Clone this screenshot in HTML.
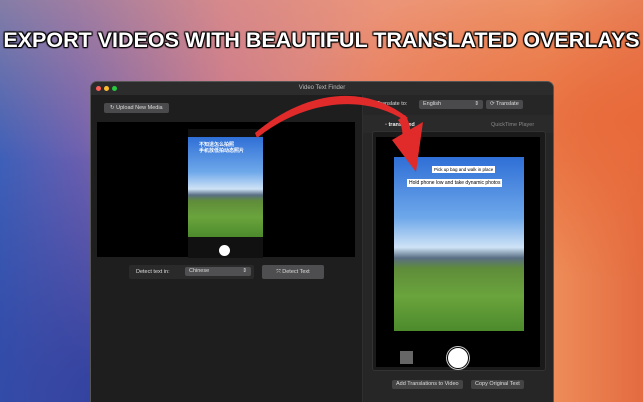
<!DOCTYPE html><html><head><style>
body{margin:0;width:643px;height:402px;overflow:hidden;position:relative;font-family:"Liberation Sans",sans-serif;
background:linear-gradient(90deg,#3d5fb8 0%,#6a5fb0 12%,#c6748a 35%,#e9866a 60%,#ee8f5a 85%,#e46b3f 100%);}
.bg2{position:absolute;inset:0;background:radial-gradient(ellipse at 20% 100%,#2a3f9e 0%,rgba(40,60,150,0) 45%),radial-gradient(ellipse at 100% 30%,#e86a3a 0%,rgba(0,0,0,0) 40%),linear-gradient(180deg,rgba(240,170,140,.4),rgba(0,0,0,0) 40%);}
h1{position:absolute;left:0;width:643px;top:28px;margin:0;text-align:center;font-size:21.5px;font-weight:bold;color:#fff;letter-spacing:0px;
text-shadow:0 0 2px #000,1px 1px 1px #000,-1px -1px 1px #000,1px -1px 1px #000,-1px 1px 1px #000;}
.win{position:absolute;left:91px;top:82px;width:462px;height:320px;background:#1e1e1f;border-radius:6px 6px 0 0;overflow:hidden;box-shadow:0 0 0 1px #555}
.tb{height:13px;background:#2c2c2d;position:relative;font-size:6px;color:#bbb;text-align:center;line-height:13px}
.dot{position:absolute;top:4px;width:5px;height:5px;border-radius:50%}
.right{position:absolute;left:271px;top:13px;right:0;bottom:0;background:#262627;border-left:1px solid #2f2f2f}
.btn{position:absolute;background:#4a4a4c;color:#ddd;font-size:5.5px;border-radius:2px;line-height:9px;padding:0 4px}
.phone{position:absolute;background:#111;}
.scene{position:absolute;background:linear-gradient(180deg,#2f6fd6 0%,#6ea8ea 35%,#cfe3f6 52%,#5a6e84 58%,#5f8c3a 64%,#6aa43c 80%,#4c8a2c 100%)}
</style></head><body><div class="bg2"></div>
<h1>EXPORT VIDEOS WITH BEAUTIFUL TRANSLATED OVERLAYS</h1>
<div class="win">
<div class="tb"><span class="dot" style="left:5px;background:#ff5f57"></span><span class="dot" style="left:13px;background:#febc2e"></span><span class="dot" style="left:21px;background:#28c840"></span>Video Text Finder</div>
<div class="btn" style="left:13px;top:21px;padding:0 6px;line-height:10px">↻ Upload New Media</div>
<div style="position:absolute;left:6px;top:40px;width:258px;height:135px;background:#000"></div>
<div class="phone" style="left:97px;top:47px;width:75px;height:129px"></div>
<div class="scene" style="left:97px;top:55px;width:75px;height:100px"></div>
<div style="position:absolute;left:108px;top:60px;font-size:5px;color:#fff;font-family:'Noto Sans CJK SC',sans-serif;line-height:6px;font-weight:bold">不知道怎么拍照<br>手机放低拍动态照片</div>
<div style="position:absolute;left:128px;top:163px;width:11px;height:11px;border-radius:50%;background:#fff"></div>
<div style="position:absolute;left:38px;top:183px;width:125px;height:14px;background:#2a2a2b;border-radius:2px"></div>
<div style="position:absolute;left:45px;top:187px;font-size:5.5px;color:#ddd">Detect text in:</div>
<div class="btn" style="left:94px;top:185px;width:58px;background:#505052">Chinese<span style="float:right">⇕</span></div>
<div class="btn" style="left:171px;top:183px;width:54px;height:14px;line-height:14px;text-align:center;background:#4e4e50">⤧ Detect Text</div>
<div class="right">
<div style="position:absolute;left:14px;top:6px;font-size:5.5px;color:#ddd">Translate to:</div>
<div class="btn" style="left:56px;top:5px;width:56px;background:#4a4a4c">English<span style="float:right">⇕</span></div>
<div class="btn" style="left:123px;top:5px;background:#4a4a4c">⟳ Translate</div>
<div style="position:absolute;left:0;right:0;top:20px;height:18px;background:#2a2a2b"></div>
<div style="position:absolute;left:22px;top:27px;font-size:5.5px;color:#eee;font-weight:bold">◦ translated_...</div>
<div style="position:absolute;left:128px;top:27px;font-size:5.5px;color:#888">QuickTime Player</div>
<div class="phone" style="left:9px;top:36px;width:172px;height:238px;border-radius:3px;background:#1a1a1a;border:1px solid #333"></div>
<div class="phone" style="left:13px;top:42px;width:164px;height:230px;background:#000"></div>
<div class="scene" style="left:31px;top:62px;width:130px;height:174px"></div>
<div style="position:absolute;left:69px;top:71px;background:#fff;font-size:4.5px;padding:1px 2px;color:#000">Pick up bag and walk in place</div>
<div style="position:absolute;left:44px;top:84px;background:#fff;font-size:5px;padding:1px 2px;color:#000">Hold phone low and take dynamic photos</div>
<div style="position:absolute;left:84px;top:252px;width:20px;height:20px;border-radius:50%;background:#fff;border:1px solid #000;box-shadow:0 0 0 1px #ccc"></div>
<div style="position:absolute;left:37px;top:256px;width:13px;height:13px;background:#666"></div>
<div class="btn" style="left:29px;top:285px;background:#444">Add Translations to Video</div>
<div class="btn" style="left:108px;top:285px;background:#444">Copy Original Text</div>
</div></div>
<svg style="position:absolute;left:0;top:0" width="643" height="402"><path d="M255 133 C300 95 360 80 408 118 L404 120 C360 92 300 103 257 138 Z" fill="#e12a2a"/><path d="M392 140 L423 122 L416 172 Z" fill="#e12a2a"/><path d="M405 115 Q412 125 410 140 L402 142 Q404 128 398 120 Z" fill="#e12a2a"/></svg>
</body></html>
